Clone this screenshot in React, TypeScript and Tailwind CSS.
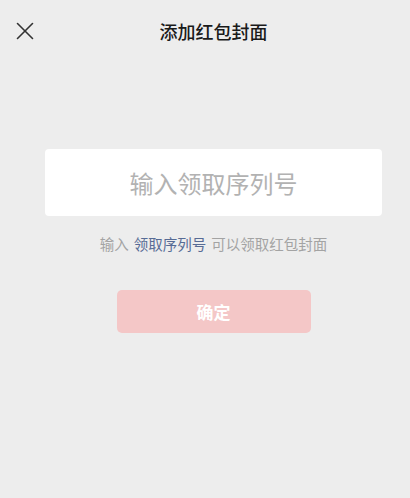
import { X } from 'lucide-react';

const font = { fontFamily: '"Noto Sans CJK SC", "Noto Sans", sans-serif' };

export default function App() {
  return (
    <div className="relative flex h-[498px] w-[410px] flex-col bg-[#ededed] pl-[17px]" style={font}>
      <button type="button" className="absolute left-[10px] top-[16px] text-[#333333]">
        <X className="h-[30px] w-[30px]" strokeWidth={1.3} />
      </button>
      <header className="flex h-[63px] items-center justify-center">
        <h1 className="text-[18px] font-medium text-[#1a1a1a]">添加红包封面</h1>
      </header>

      <div className="mt-[86px] px-[28px]">
        <input
          className="h-[67px] w-full rounded-[4px] bg-white text-center text-[24px] text-[#1a1a1a] outline-none placeholder:text-[#b2b2b2]"
          placeholder="输入领取序列号"
        />
      </div>

      <p className="mt-[17px] text-center text-[14.5px] text-[#a3a3a3]">
        输入<span className="mx-[5px] text-[#576b95]">领取序列号</span>可以领取红包封面
      </p>

      <div className="mt-[35px] flex justify-center">
        <button
          type="button"
          className="h-[43px] w-[194px] rounded-[5px] bg-[#f4c7c7] text-[17px] font-bold text-white"
        >
          确定
        </button>
      </div>
    </div>
  );
}
